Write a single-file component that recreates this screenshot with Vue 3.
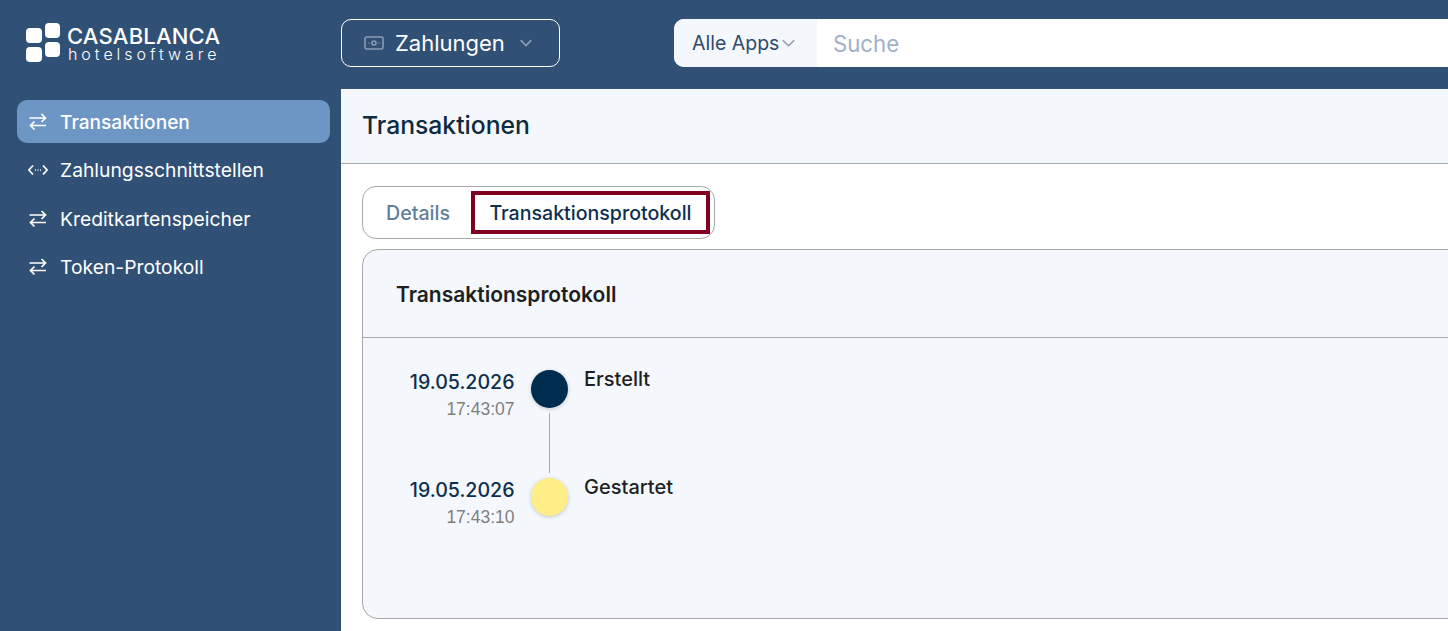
<template>
  <div class="app">
    <header class="topbar">
      <div class="logo">
        <div class="logo-mark">
          <div class="logo-col low"><span></span><span></span></div>
          <div class="logo-col"><span></span><span></span></div>
        </div>
        <div class="logo-text">
          <div class="logo-name">CASABLANCA</div>
          <div class="logo-sub">hotelsoftware</div>
        </div>
      </div>
      <button class="app-switch">
        <svg class="money" viewBox="0 0 20 14" width="20" height="14" fill="none" stroke="currentColor">
          <rect x="1" y="1" width="18" height="12" rx="1.5" stroke-width="1.6" />
          <circle cx="10" cy="7" r="2" stroke-width="1.6" />
          <path d="M4.6 7h.9M14.5 7h.9" stroke-width="1.6" />
        </svg>
        <span>Zahlungen</span>
        <svg class="chev" viewBox="0 0 12 8" width="12" height="8" fill="none" stroke="currentColor" stroke-width="1.7">
          <path d="M.8 1.2L6 6.6l5.2-5.4" />
        </svg>
      </button>
      <div class="search">
        <div class="search-scope">
          <span>Alle Apps</span>
          <svg viewBox="0 0 13 8" width="13" height="8" fill="none" stroke="currentColor" stroke-width="1.5">
            <path d="M.8 1.2l5.7 5.5 5.7-5.5" />
          </svg>
        </div>
        <div class="search-input">Suche</div>
      </div>
    </header>

    <div class="body">
      <nav class="sidebar">
        <a v-for="item in navItems" :key="item.label" class="nav-item" :class="{ active: item.active }">
          <svg v-if="item.icon === 'swap'" viewBox="0 0 18 18" width="18" height="18" fill="none" stroke="currentColor" stroke-width="1.7">
            <path d="M.5 5h16M12.5 1l4 4-4 4M17 12.5H1.5M5.5 8.5l-4 4 4 4" />
          </svg>
          <svg v-else viewBox="0 0 20 18" width="20" height="18" fill="none" stroke="currentColor" stroke-width="1.8">
            <path d="M5 4.5L.9 9 5 13.5M15 4.5L19.1 9 15 13.5" />
            <path d="M7 9h1M9.5 9h1M12 9h1" stroke-width="1.6" />
          </svg>
          <span>{{ item.label }}</span>
        </a>
      </nav>

      <main class="content">
        <div class="page-head">Transaktionen</div>
        <div class="page-body">
          <div class="tabs">
            <div class="tab">Details</div>
            <div class="tab selected">Transaktionsprotokoll</div>
          </div>
          <section class="card">
            <h2 class="card-head">Transaktionsprotokoll</h2>
            <div class="timeline">
              <div v-for="(row, i) in events" :key="row.time" class="event">
                <div class="event-date">
                  <div class="date">{{ row.date }}</div>
                  <div class="time">{{ row.time }}</div>
                </div>
                <div class="event-marker">
                  <div class="dot" :class="row.kind"></div>
                  <div v-if="i < events.length - 1" class="line"></div>
                </div>
                <div class="event-label">{{ row.label }}</div>
              </div>
            </div>
          </section>
        </div>
      </main>
    </div>
  </div>
</template>

<script setup>
const navItems = [
  { label: 'Transaktionen', icon: 'swap', active: true },
  { label: 'Zahlungsschnittstellen', icon: 'code' },
  { label: 'Kreditkartenspeicher', icon: 'swap' },
  { label: 'Token-Protokoll', icon: 'swap' },
]

const events = [
  { date: '19.05.2026', time: '17:43:07', label: 'Erstellt', kind: 'navy' },
  { date: '19.05.2026', time: '17:43:10', label: 'Gestartet', kind: 'yellow' },
]
</script>

<style>
html, body {
  margin: 0;
  overflow: hidden;
  background: #315075;
}
</style>

<style scoped>
.app {
  width: 1800px;
  height: 631px;
  overflow: hidden;
  background: #315075;
  font-family: Inter, "Liberation Sans", sans-serif;
  color: #1f2933;
}

.topbar {
  height: 89px;
  display: flex;
  align-items: flex-start;
}

.logo {
  width: 341px;
  padding: 23px 0 0 26px;
  box-sizing: border-box;
  display: flex;
  color: #fff;
}

.logo-mark {
  display: flex;
  gap: 3px;
}

.logo-col {
  display: flex;
  flex-direction: column;
  gap: 4px;
}

.logo-col.low {
  padding-top: 5px;
}

.logo-col span {
  width: 15.5px;
  height: 15px;
  border-radius: 4px;
  background: #fff;
}

.logo-text {
  margin-left: 7px;
}

.logo-name {
  font-size: 22px;
  line-height: 20px;
  margin-top: 3px;
  font-weight: 500;
  letter-spacing: 0.2px;
}

.logo-sub {
  font-size: 16px;
  line-height: 16px;
  margin-left: 1px;
  letter-spacing: 3.95px;
  font-weight: 300;
}

.app-switch {
  width: 219px;
  height: 48px;
  margin-top: 19px;
  padding: 0 0 0 22px;
  border: 1px solid #fff;
  border-radius: 10px;
  background: transparent;
  color: #fff;
  display: flex;
  align-items: center;
  font: inherit;
  font-size: 22px;
}

.money {
  color: #8b9cb2;
  margin-right: 11px;
}

.chev {
  color: #8b9cb2;
  margin-left: 15px;
}

.search {
  margin: 19px 0 0 114px;
  flex: 1;
  height: 48px;
  display: flex;
  border-radius: 10px;
  overflow: hidden;
  background: #fff;
}

.search-scope {
  width: 143px;
  padding-left: 18px;
  box-sizing: border-box;
  background: #f4f7fc;
  display: flex;
  align-items: center;
  gap: 3px;
  font-size: 19.5px;
  color: #2f4a6d;
}

.search-scope svg {
  color: #8b9cb2;
}

.search-input {
  padding-left: 16px;
  display: flex;
  align-items: center;
  font-size: 22.2px;
  color: #9fb0c6;
}

.body {
  display: flex;
  height: 542px;
}

.sidebar {
  width: 341px;
  flex: none;
  box-sizing: border-box;
  padding: 11px 11px 0 17px;
  display: flex;
  flex-direction: column;
  gap: 5.5px;
}

.nav-item {
  height: 43px;
  padding-left: 11px;
  border-radius: 10px;
  display: flex;
  align-items: center;
  gap: 12px;
  color: #fff;
  font-size: 19.3px;
}

.nav-item svg {
  flex: none;
  width: 20px;
}

.nav-item.active {
  background: #6d96c5;
  font-weight: 500;
  font-size: 19.1px;
}

.content {
  flex: 1;
  background: #fff;
}

.page-head {
  height: 75px;
  box-sizing: border-box;
  padding: 0 0 2px 21px;
  display: flex;
  align-items: center;
  background: #f4f7fc;
  border-bottom: 1px solid #a9a9a9;
  font-size: 24.7px;
  font-weight: 500;
  color: #0d2a3f;
}

.page-body {
  padding: 22px 21px 0;
}

.tabs {
  width: 353px;
  height: 53px;
  box-sizing: border-box;
  border: 1px solid #a9a9a9;
  border-radius: 14px;
  padding: 4px 0 0 4px;
  display: flex;
  align-items: flex-start;
}

.tab {
  height: 43px;
  box-sizing: border-box;
  padding: 0 19px;
  display: flex;
  align-items: center;
  font-size: 19.6px;
  font-weight: 500;
  color: #5f7f9b;
}

.tab.selected {
  width: 239px;
  flex: none;
  margin-left: 2px;
  padding: 0;
  justify-content: center;
  border: 4px solid #800020;
  color: #0d2f4f;
}

.card {
  margin-top: 10px;
  height: 370px;
  box-sizing: border-box;
  border: 1px solid #a9a9a9;
  border-radius: 16px;
  background: #f4f7fc;
}

.card-head {
  margin: 0;
  height: 88px;
  box-sizing: border-box;
  padding: 2px 0 0 33px;
  display: flex;
  align-items: center;
  border-bottom: 1px solid #a9a9a9;
  font-size: 21px;
  font-weight: 600;
  color: #1f1f1f;
}

.timeline {
  padding-top: 32px;
}

.event {
  height: 108px;
  display: flex;
}

.event-date {
  width: 151.5px;
  text-align: right;
}

.date {
  margin-top: -1px;
  font-size: 19.6px;
  line-height: 27px;
  font-weight: 500;
  color: #0d2f4f;
}

.time {
  margin-top: 3px;
  font-size: 17.5px;
  line-height: 20px;
  color: #7f7f7f;
  font-family: "Liberation Sans", sans-serif;
}

.event-marker {
  width: 37px;
  margin-left: 16.5px;
  display: flex;
  flex-direction: column;
  align-items: center;
}

.dot {
  width: 37px;
  height: 38px;
  border-radius: 50%;
  flex: none;
  box-shadow: 0 1px 4px rgba(0, 0, 0, 0.2);
}

.dot.navy {
  background: #002c4f;
}

.dot.yellow {
  background: #fdee87;
}

.line {
  width: 1px;
  height: 60px;
  margin-top: 5px;
  background: #a9a9a9;
}

.event-label {
  margin-left: 16px;
  font-size: 20px;
  line-height: 18px;
  font-weight: 500;
  color: #1f1f1f;
}
</style>
